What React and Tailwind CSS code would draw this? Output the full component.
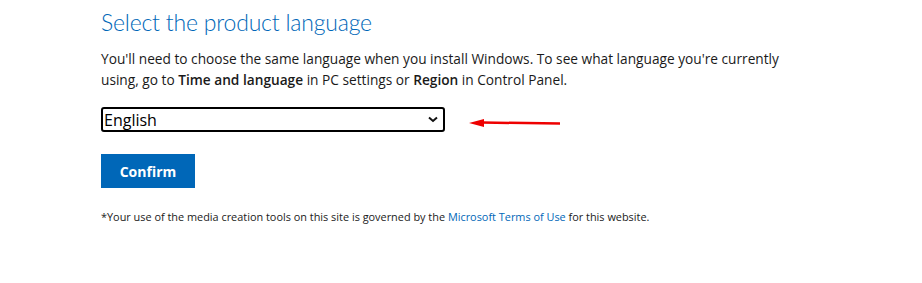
export default function App() {
    return (
        <div className="min-h-[283px] bg-white px-[101px] pt-[6px] font-['Open_Sans',sans-serif] text-[#1a1a1a]">
            {/* HEADER */}
            <h1 className="font-['Lato',sans-serif] text-[23px] font-light leading-[32px] tracking-[-0.2px] text-[#0067b8]">
                Select the product language
            </h1>

            <p className="mt-[10px] w-[700px] text-[13.7px] leading-[21px]">
                You'll need to choose the same language when you install Windows. To see what language you're currently
                using, go to <b className="font-semibold">Time and language</b> in PC settings or{" "}
                <b className="font-semibold">Region</b> in Control Panel.
            </p>

            {/* SELECT + ARROW */}
            <div className="mt-[17px] flex items-center">
                <div className="flex h-[25px] w-[344px] items-center justify-between rounded-[3px] border-2 border-black pl-[1px] pr-[5px]">
                    <span className="text-[16px] leading-[20px] text-black">English</span>
                    <svg width="10" height="7" viewBox="0 0 10 7" fill="none">
                        <path d="M1 1.5 L5 5 L9 1.5" stroke="#111" strokeWidth="2" />
                    </svg>
                </div>
                <svg className="ml-[24px] mt-[7px]" width="92" height="10" viewBox="0 0 92 10">
                    <path d="M0 5 L15 1 L15 9 Z" fill="#ee0000" />
                    <path d="M13 4.6 L91 5.4" stroke="#ee0000" strokeWidth="2.5" />
                </svg>
            </div>

            <button className="mt-[22px] h-[34px] w-[94px] bg-[#0067b8] text-[14px] font-bold text-white">
                Confirm
            </button>

            <p className="mt-[21px] text-[10.9px] leading-[15px]">
                *Your use of the media creation tools on this site is governed by the{" "}
                <span className="text-[#0067b8]">Microsoft Terms of Use</span> for this website.
            </p>
        </div>
    );
}
